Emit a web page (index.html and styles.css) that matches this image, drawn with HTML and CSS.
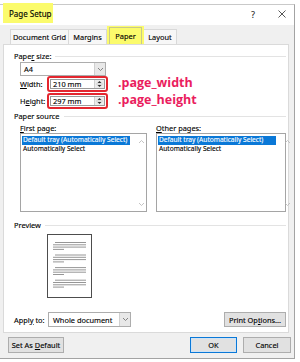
FILE: index.html
```html
<!DOCTYPE html>
<html>
<head>
<meta charset="utf-8">
<title>Page Setup</title>
<link rel="stylesheet" href="styles.css">
</head>
<body>
<div class="dialog">
  <div class="titlebar">
    <div class="title">Page Setup</div>
    <div class="help">?</div>
    <div class="close"><svg width="8" height="8" viewBox="0 0 8 8"><path d="M0.5 0.5L7.5 7.5M7.5 0.5L0.5 7.5" stroke="#444" stroke-width="0.9" fill="none"/></svg></div>
  </div>
  <div class="tabs">
    <div class="tab tab-doc">Document Grid</div>
    <div class="tab tab-mar">Margins</div>
    <div class="tab-hl"><div class="tab-active">Paper</div></div>
    <div class="tab tab-lay">Layout</div>
  </div>
  <div class="panel">
    <div class="ghead ghead-size"><span>Pape<u>r</u> size:</span></div>
    <div class="select sel-a4">
      <span class="sel-text">A4</span>
      <span class="sel-arrow"><svg width="7" height="5" viewBox="0 0 7 5"><path d="M1 1L3.5 3.5L6 1" stroke="#777" stroke-width="0.9" fill="none"/></svg></span>
    </div>
    <div class="dim-row">
      <span class="dim-label"><u>W</u>idth:</span>
      <div class="redbox">
        <div class="spin-input">
          <span class="val">210 mm</span>
          <span class="spinner"><svg width="9" height="8" viewBox="0 0 9 8"><path d="M4.5 1L6.5 3H2.5Z M2.5 5H6.5L4.5 7Z" fill="#333"/><path d="M1 4H8" stroke="#bbb" stroke-width="0.6"/></svg></span>
        </div>
      </div>
      <span class="anno">.page_width</span>
    </div>
    <div class="dim-row dim-row2">
      <span class="dim-label">H<u>e</u>ight:</span>
      <div class="redbox">
        <div class="spin-input">
          <span class="val">297 mm</span>
          <span class="spinner"><svg width="9" height="8" viewBox="0 0 9 8"><path d="M4.5 1L6.5 3H2.5Z M2.5 5H6.5L4.5 7Z" fill="#333"/><path d="M1 4H8" stroke="#bbb" stroke-width="0.6"/></svg></span>
        </div>
      </div>
      <span class="anno">.page_height</span>
    </div>
    <div class="ghead ghead-src"><span>Paper source</span></div>
    <div class="sources">
      <div class="src-col col-first">
        <div class="src-label"><span><u>F</u>irst page:</span></div>
        <div class="listbox">
          <div class="items">
            <div class="item"><span class="sel">Default tray (Automatically Select)</span></div>
            <div class="item">Automatically Select</div>
          </div>
          <div class="scroll">
            <svg width="7" height="5" viewBox="0 0 7 5"><path d="M1 4L3.5 1.5L6 4" stroke="#b5b5b5" stroke-width="0.8" fill="none"/></svg>
            <svg width="7" height="5" viewBox="0 0 7 5"><path d="M1 1L3.5 3.5L6 1" stroke="#b5b5b5" stroke-width="0.8" fill="none"/></svg>
          </div>
        </div>
      </div>
      <div class="src-col col-other">
        <div class="src-label"><span><u>O</u>ther pages:</span></div>
        <div class="listbox">
          <div class="items">
            <div class="item"><span class="sel">Default tray (Automatically Select)</span></div>
            <div class="item">Automatically Select</div>
          </div>
          <div class="scroll">
            <svg width="7" height="5" viewBox="0 0 7 5"><path d="M1 4L3.5 1.5L6 4" stroke="#b5b5b5" stroke-width="0.8" fill="none"/></svg>
            <svg width="7" height="5" viewBox="0 0 7 5"><path d="M1 1L3.5 3.5L6 1" stroke="#b5b5b5" stroke-width="0.8" fill="none"/></svg>
          </div>
        </div>
      </div>
    </div>
    <div class="ghead ghead-prev"><span>Preview</span></div>
    <div class="preview">
      <svg width="45" height="64" viewBox="0 0 45 64">
        <rect x="0.5" y="0.5" width="44" height="63" fill="#fff" stroke="#4d4d4d" stroke-width="1"/>
        <g stroke="#8a8a8a" stroke-width="0.9">
          <path d="M8 8.5H39M6 10.8H39M6 13.1H39M6 15.4H17"/>
          <path d="M8 21H39M6 23.3H39M6 25.6H39M6 27.9H17"/>
          <path d="M8 33.6H39M6 35.9H39M6 38.2H39M6 40.5H17"/>
          <path d="M8 46.2H39M6 48.5H39M6 50.8H39M6 53.1H17"/>
        </g>
      </svg>
    </div>
    <div class="apply-row">
      <span class="apply-label">Appl<u>y</u> to:</span>
      <div class="select sel-apply">
        <span class="sel-text">Whole document</span>
        <span class="sel-arrow"><svg width="7" height="5" viewBox="0 0 7 5"><path d="M1 1L3.5 3.5L6 1" stroke="#777" stroke-width="0.9" fill="none"/></svg></span>
      </div>
      <div class="btn btn-print"><span>Print Op<u>t</u>ions...</span></div>
    </div>
  </div>
  <div class="footer">
    <div class="btn btn-default"><span>Set As <u>D</u>efault</span></div>
    <div class="btn btn-ok"><span>OK</span></div>
    <div class="btn btn-cancel"><span>Cancel</span></div>
  </div>
</div>
</body>
</html>
```
FILE: styles.css
```css
* { box-sizing: border-box; margin: 0; padding: 0; }
html, body { width: 300px; height: 362px; }
body {
  background: #fff;
  font-family: "Noto Sans", "DejaVu Sans", sans-serif;
  font-size: 7.4px;
  color: #000;
  -webkit-text-stroke: 0.12px #000;
  overflow: hidden;
}
u { text-decoration: underline; text-underline-offset: 1px; }

.dialog {
  margin-top: 4px;
  width: 295px;
  height: 355px;
  border-top: 1px solid #c9c9c9;
  border-right: 1px solid #a3a3a3;
  border-bottom: 1px solid #a3a3a3;
  background: #f0f0f0;
  display: flex;
  flex-direction: column;
}

.titlebar {
  height: 20px;
  background: #fff;
  display: flex;
  align-items: flex-start;
}
.title {
  margin: -2px 0 0 3px;
  height: 20px;
  width: 50px;
  background: #fbfb6c;
  padding-left: 6px;
  display: flex;
  align-items: center;
  font-size: 8px;
}
.help {
  margin-left: auto;
  width: 10px;
  height: 18px;
  display: flex;
  align-items: center;
  justify-content: center;
  font-size: 8.5px;
  color: #333;
}
.close {
  margin: 0 7px 0 19px;
  width: 10px;
  height: 18px;
  display: flex;
  align-items: center;
  justify-content: center;
}

.tabs {
  height: 19px;
  padding-left: 10px;
  display: flex;
  align-items: flex-end;
}
.tab {
  height: 15px;
  border: 1px solid #d9d9d9;
  border-bottom: none;
  background: #f7f7f7;
  display: flex;
  align-items: center;
  justify-content: center;
}
.tab-doc { width: 59px; }
.tab-mar { width: 38px; border-left: none; }
.tab-lay { width: 33px; border-left: none; }
.tab-hl {
  width: 37px;
  height: 18px;
  background: #fbfb6c;
  padding: 1px 2px 0 2px;
}
.tab-active {
  height: 17px;
  border: 1px solid #c9c98a;
  border-bottom: none;
  display: flex;
  align-items: center;
  justify-content: center;
  padding-bottom: 1px;
}

.panel {
  margin-left: 3px;
  width: 286px;
  height: 289px;
  background: #fff;
  border: 1px solid #dadada;
  padding: 0 2px 0 10px;
  display: flex;
  flex-direction: column;
}

.ghead {
  height: 12px;
  display: flex;
  align-items: center;
}
.ghead::after {
  content: "";
  flex: 1;
  height: 1px;
  background: #e3e3e3;
  margin-left: 4px;
}
.ghead-size { margin-top: 5px; }
.ghead-src { margin-top: 1px; }
.ghead-prev { margin-top: 7px; }

.select {
  height: 14px;
  border: 1px solid #adadad;
  background: #fff;
  display: flex;
  align-items: center;
}
.sel-text { flex: 1; padding-left: 3px; }
.sel-arrow {
  width: 11px;
  height: 100%;
  background: #e8e8e8;
  border-left: 1px solid #d0d0d0;
  display: flex;
  align-items: center;
  justify-content: center;
}
.sel-a4 { margin-left: 6px; width: 86px; }

.dim-row {
  height: 16px;
  margin-left: 6px;
  display: flex;
  align-items: center;
}
.dim-row2 { margin-top: 1px; }
.dim-label { width: 27px; }
.redbox {
  width: 61px;
  height: 16px;
  border: 2px solid #e3262f;
  border-radius: 3px;
  padding: 1px;
}
.spin-input {
  height: 100%;
  border: 1px solid #9a9a9a;
  display: flex;
  align-items: center;
}
.val { flex: 1; padding-left: 2px; }
.spinner {
  width: 10px;
  height: 100%;
  background: #ececec;
  border-left: 1px solid #d0d0d0;
  display: flex;
  align-items: center;
  justify-content: center;
}
.anno {
  margin-left: 10px;
  font-family: "Open Sans", "Noto Sans", sans-serif;
  font-weight: 700;
  font-size: 12.5px;
  color: #ea1d5e;
  -webkit-text-stroke: 0;
  line-height: 1;
  margin-top: -2px;
}

.sources {
  display: flex;
  padding-left: 6px;
  gap: 9px;
}
.src-col { display: flex; flex-direction: column; }
.col-first { width: 127px; }
.col-other { width: 130px; }
.src-label {
  height: 11px;
  display: flex;
  align-items: center;
}
.listbox {
  height: 79px;
  border: 1px solid #a5a5a5;
  background: #fff;
  display: flex;
  padding: 2px 1px 2px 1px;
}
.items { flex: 1; display: flex; flex-direction: column; padding-right: 8px; }
.item {
  height: 8.5px;
  line-height: 8.5px;
  font-size: 6.6px;
  white-space: nowrap;
  overflow: hidden;
}
.item .sel {
  display: block;
  background: #0a78d7;
  color: #fff;
  -webkit-text-stroke: 0.12px #fff;
  padding: 0 3px 0 1px;
}
.item:not(:first-child) { padding-left: 1px; }
.col-first .item .sel { width: 108px; }
.col-other .item .sel { width: 118px; }
.scroll {
  width: 9px;
  display: flex;
  flex-direction: column;
  justify-content: space-between;
  align-items: center;
  padding: 3px 0 2px;
}

.preview {
  margin: 3px 0 0 33px;
  width: 45px;
  height: 64px;
  filter: drop-shadow(0.5px 0.5px 0.5px rgba(0,0,0,0.25));
}
.preview svg { display: block; }

.apply-row {
  margin-top: 14px;
  height: 15px;
  display: flex;
  align-items: center;
}
.apply-label { width: 34px; }
.sel-apply { width: 83px; height: 15px; }
.sel-apply .sel-text { padding-left: 4px; }

.btn {
  height: 15px;
  background: #e1e1e1;
  border: 1px solid #adadad;
  display: flex;
  align-items: center;
  justify-content: center;
}
.btn-print { margin-left: auto; width: 62px; }

.footer {
  display: flex;
  padding: 4px 3px 0 8px;
}
.footer .btn { height: 16px; }
.btn-default { width: 56px; }
.btn-ok { margin-left: auto; width: 47px; border: 1px solid #0a78d7; box-shadow: inset 0 0 0 1px #cfe3f5; }
.btn-cancel { margin-left: 6px; width: 48px; }
```
